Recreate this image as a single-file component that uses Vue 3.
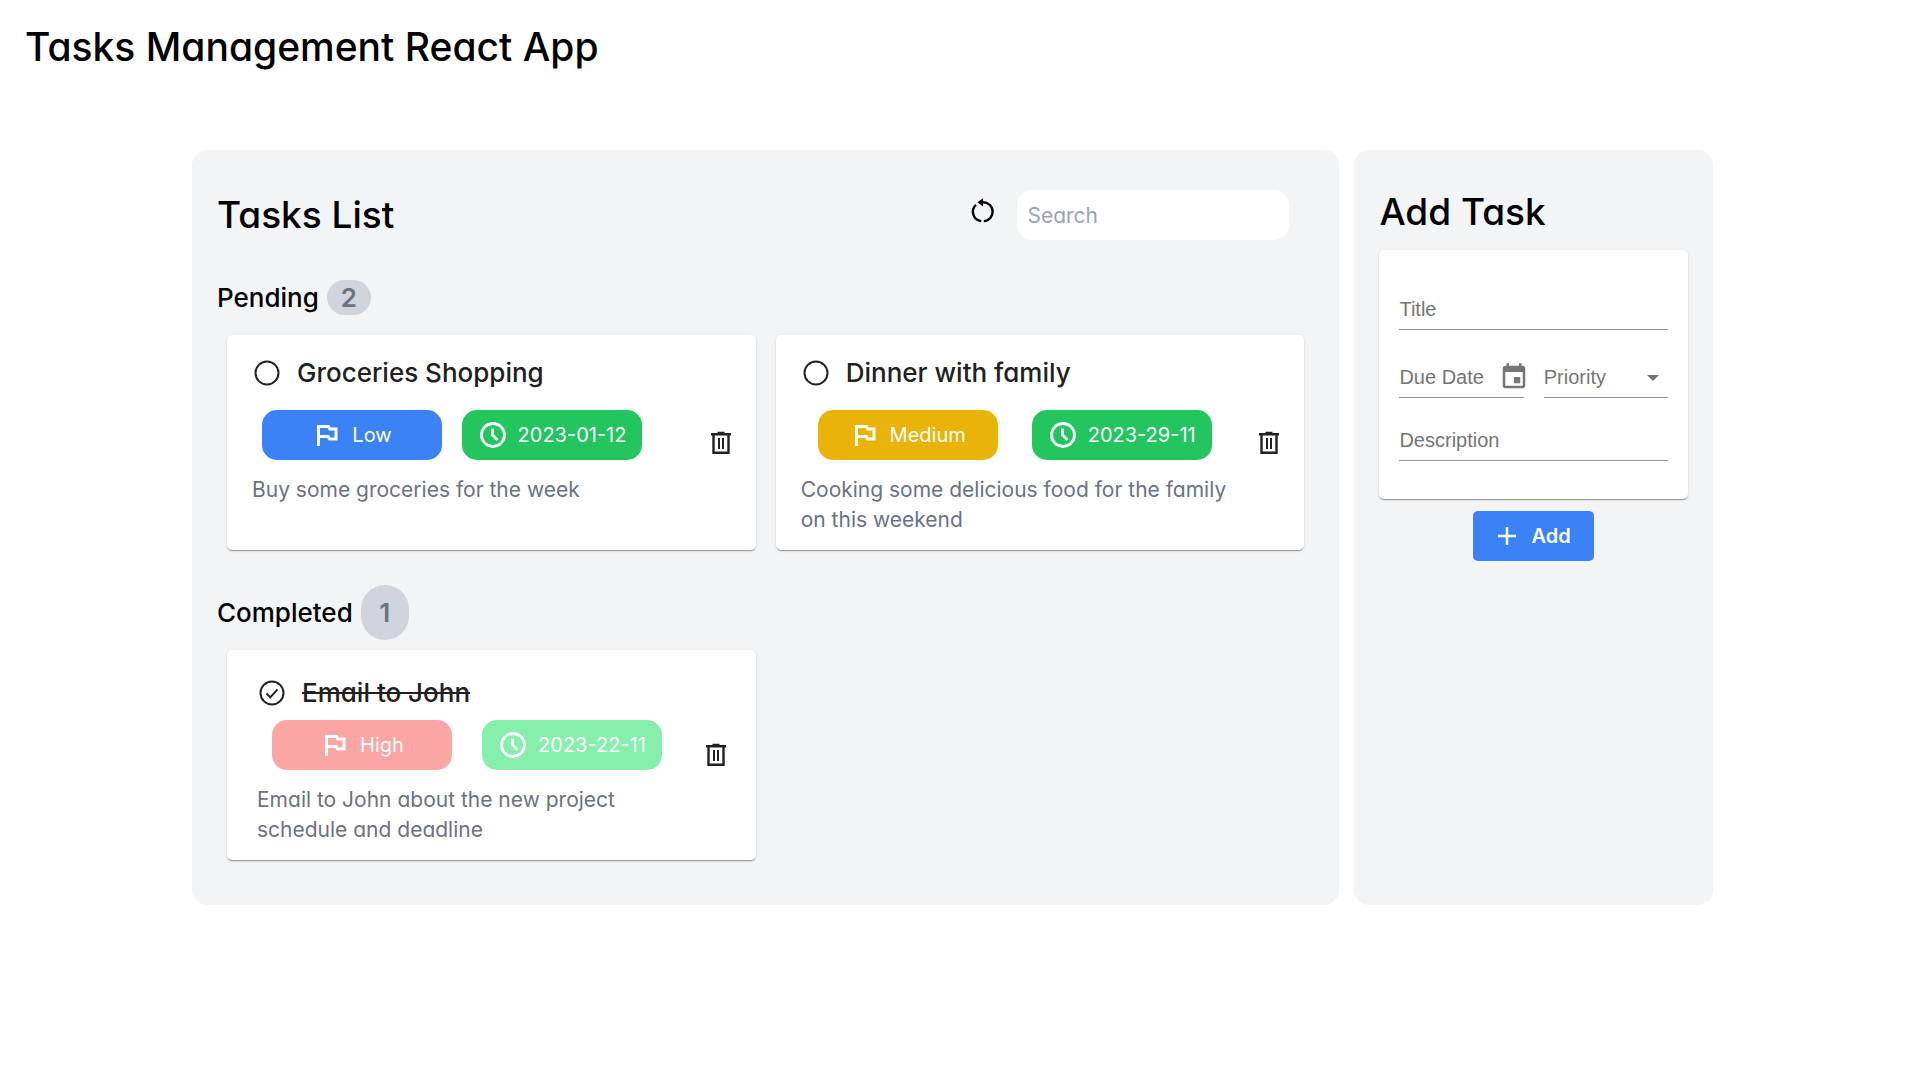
<script setup>
import { reactive, computed, ref } from 'vue'

const search = ref('')
const form = reactive({ title: '', due: '', priority: '', description: '' })

const tasks = reactive([
  { id: 1, title: 'Groceries Shopping', priority: 'Low', due: '2023-01-12', text: 'Buy some groceries for the week', done: false },
  { id: 2, title: 'Dinner with family', priority: 'Medium', due: '2023-29-11', text: 'Cooking some delicious food for the family on this weekend', done: false },
  { id: 3, title: 'Email to John', priority: 'High', due: '2023-22-11', text: 'Email to John about the new project schedule and deadline', done: true }
])

const matching = computed(() => tasks.filter((t) => t.title.toLowerCase().includes(search.value.toLowerCase())))
const groups = computed(() => [
  { name: 'Pending', items: matching.value.filter((t) => !t.done) },
  { name: 'Completed', items: matching.value.filter((t) => t.done) }
])

function remove(id) {
  tasks.splice(tasks.findIndex((t) => t.id === id), 1)
}

function add() {
  if (!form.title) return
  tasks.push({
    id: Date.now(),
    title: form.title,
    priority: form.priority || 'Low',
    due: form.due,
    text: form.description,
    done: false
  })
  Object.assign(form, { title: '', due: '', priority: '', description: '' })
}
</script>

<template>
  <div class="page">
    <header class="top">
      <h1>Tasks Management React App</h1>
    </header>

    <main class="board">
      <section class="panel list">
        <div class="list-head">
          <h2>Tasks List</h2>
          <div class="tools">
            <button type="button" class="icon-btn" aria-label="Reset" @click="search = ''">
              <svg class="reset" viewBox="0 0 24 24" fill="none" stroke="currentColor" stroke-width="2.200">
                <path d="M11.300 21.400A8.700 8.700 0 0 1 6.500 6.300" />
                <path d="M13.700 21.400A8.700 8.700 0 0 0 12.500 4H10" />
                <path d="M13 .2v7.600L7.800 4z" fill="currentColor" stroke="none" />
              </svg>
            </button>
            <input v-model="search" class="search" type="text" placeholder="Search" aria-label="Search" />
          </div>
        </div>

        <section v-for="group in groups" :key="group.name" class="group" :class="group.name.toLowerCase()">
          <h3>{{ group.name }} <span class="count">{{ group.items.length }}</span></h3>
          <div class="cards">
            <article v-for="task in group.items" :key="task.id" class="card" :class="[task.priority.toLowerCase(), { done: task.done }]">
              <div class="body">
                <label class="task-title">
                  <span class="tick">
                    <input v-model="task.done" type="checkbox" />
                    <svg viewBox="0 0 26 26" fill="none" stroke="currentColor" stroke-width="2">
                      <circle cx="13" cy="13" r="11.500" />
                      <path v-if="task.done" d="M7.500 13.500l3.800 3.800 7.200-8" />
                    </svg>
                  </span>
                  <span class="name">{{ task.title }}</span>
                </label>
                <div class="pills">
                  <span class="pill priority">
                    <svg viewBox="0 0 30 30" fill="none" stroke="currentColor" stroke-width="3">
                      <path d="M6.500 26V6.500h10l1.200 2.500h6.300v10h-6.500l-1.300-2.500H6.500" />
                    </svg>
                    {{ task.priority }}
                  </span>
                  <span class="pill date">
                    <svg viewBox="0 0 30 30" fill="none" stroke="currentColor" stroke-width="2.800">
                      <circle cx="15" cy="15" r="11.500" />
                      <path d="M14.500 8.500V15l5 5" />
                    </svg>
                    {{ task.due }}
                  </span>
                </div>
                <p>{{ task.text }}</p>
              </div>
              <button type="button" class="icon-btn" aria-label="Delete" @click="remove(task.id)">
                <svg class="trash" viewBox="0 0 20 24" fill="none" stroke="currentColor" stroke-width="2.400">
                  <path d="M0 3.200h20M6.500 2h7M2.500 3v18.800h15V3" />
                  <path d="M8 7v11M12 7v11" stroke-width="2" />
                </svg>
              </button>
            </article>
          </div>
        </section>
      </section>

      <aside class="panel add">
        <h2>Add Task</h2>
        <form @submit.prevent="add">
          <div class="sheet">
            <div class="field" :class="{ filled: form.title }">
              <input id="title" v-model="form.title" type="text" />
              <label for="title">Title</label>
            </div>
            <div class="pair">
              <div class="field" :class="{ filled: form.due }">
                <input id="due" v-model="form.due" type="text" />
                <label for="due">Due Date</label>
                <button type="button" class="icon-btn calendar" aria-label="Choose date">
                  <svg viewBox="0 0 24 24" fill="currentColor">
                    <path d="M17 12h-5v5h5v-5zM16 1v2H8V1H6v2H5c-1.110 0-1.990.9-1.990 2L3 19c0 1.100.89 2 2 2h14c1.100 0 2-.9 2-2V5c0-1.100-.9-2-2-2h-1V1h-2zm3 18H5V8h14v11z" />
                  </svg>
                </button>
              </div>
              <div class="field" :class="{ filled: form.priority }">
                <select id="priority" v-model="form.priority">
                  <option value=""></option>
                  <option>Low</option>
                  <option>Medium</option>
                  <option>High</option>
                </select>
                <label for="priority">Priority</label>
                <svg class="arrow" viewBox="0 0 12 6" fill="currentColor"><path d="M0 0h12L6 6z" /></svg>
              </div>
            </div>
            <div class="field" :class="{ filled: form.description }">
              <input id="description" v-model="form.description" type="text" />
              <label for="description">Description</label>
            </div>
          </div>
          <button type="submit" class="submit">
            <svg viewBox="0 0 20 20" stroke="currentColor" stroke-width="2.400"><path d="M1 10h18M10 1v18" /></svg>
            Add
          </button>
        </form>
      </aside>
    </main>
  </div>
</template>

<style>
body {
  background: #fff;
}
</style>

<style scoped>
.page,
.page * {
  box-sizing: border-box;
}
.page {
  font-family: Inter, sans-serif;
  font-feature-settings: "cv11";
  color: #000;
}
h1,
h2,
h3,
p {
  margin: 0;
  font-weight: 500;
}
h1 {
  font-size: 39px;
  line-height: 50px;
}
h2 {
  font-size: 37px;
  line-height: 50px;
}
button,
input,
select {
  font: inherit;
  color: inherit;
  border: 0;
  padding: 0;
  margin: 0;
  background: none;
}
svg {
  display: block;
  flex: none;
}
.icon-btn {
  flex: none;
  cursor: pointer;
}
.top {
  padding: 22px 25px;
  height: 150px;
}
.board {
  display: grid;
  grid-template-columns: minmax(0, 16fr) minmax(0, 5fr);
  gap: 15px;
  padding: 0 calc(10% + 15px) 40px 10%;
}
.panel {
  background: #f3f4f6;
  border-radius: 15px;
}
.list {
  padding: 40px 25px 45px;
}
.list-head {
  display: flex;
  align-items: center;
  justify-content: space-between;
  padding-right: 25px;
}
.tools {
  display: flex;
  align-items: center;
  gap: 22px;
}
.reset {
  width: 26px;
  height: 26px;
  margin-bottom: 8px;
}
.search {
  width: 272px;
  height: 50px;
  padding: 0 10px;
  border-radius: 15px;
  background: #fff;
  font-size: 21px;
}
.search::placeholder {
  color: #9ca3af;
  opacity: 1;
}
h3 {
  display: flex;
  align-items: center;
  gap: 8px;
  font-size: 26px;
  line-height: 35px;
}
.pending h3 {
  padding: 40px 0 20px;
}
.completed h3 {
  padding: 35px 0 10px;
}
.count {
  display: grid;
  place-items: center;
  width: 44px;
  height: 35px;
  border-radius: 24px;
  background: #d1d5db;
  color: #6b7280;
  font-weight: 600;
}
.completed .count {
  width: 48px;
  height: 55px;
}
.cards {
  display: grid;
  grid-template-columns: repeat(2, minmax(0, 1fr));
  gap: 20px;
  padding: 0 10px;
}
.card,
.sheet {
  background: #fff;
  border-radius: 5px;
  box-shadow: 0 2px 1px -1px rgba(0, 0, 0, 0.2), 0 1px 1px rgba(0, 0, 0, 0.14), 0 1px 3px rgba(0, 0, 0, 0.12);
}
.card {
  display: flex;
  align-items: center;
  justify-content: space-between;
  padding: 15px 25px 10px;
  min-height: 215px;
  color: #212121;
}
.card.done {
  padding: 20px 30px 10px;
  min-height: 210px;
}
.card .icon-btn {
  margin-bottom: 4px;
}
.card.done .icon-btn {
  margin-bottom: 10px;
}
.body {
  width: 400px;
  align-self: flex-start;
}
.medium .body {
  width: 428px;
}
.done .body {
  width: 420px;
}
.task-title {
  display: flex;
  align-items: center;
  gap: 17px;
  height: 45px;
  padding-left: 2px;
  font-size: 26px;
  font-weight: 500;
}
.done .name {
  text-decoration: line-through;
}
.tick {
  position: relative;
  flex: none;
}
.tick svg {
  width: 26px;
  height: 26px;
}
.tick input {
  position: absolute;
  inset: 0;
  width: 100%;
  height: 100%;
  opacity: 0;
}
.pills {
  display: flex;
  justify-content: space-around;
  padding: 15px 0;
}
.done .pills {
  padding: 5px 0 15px;
}
.pill {
  display: flex;
  align-items: center;
  justify-content: center;
  gap: 10px;
  width: 180px;
  height: 50px;
  border-radius: 15px;
  color: #fff;
  font-size: 20px;
}
.pill svg {
  width: 30px;
  height: 30px;
}
.date {
  background: #22c55e;
}
.low .priority {
  background: #3b82f6;
}
.medium .priority {
  background: #eab308;
}
.high .priority {
  background: #ef4444;
}
.done .date {
  background: #86efac;
}
.done.high .priority {
  background: #fca5a5;
}
p {
  font-size: 21px;
  line-height: 30px;
  font-weight: 400;
  color: #6b7280;
}
.body p {
  margin-right: -8px;
}
.trash {
  width: 20px;
  height: 24px;
}
.add {
  padding: 37px 25px;
}
.sheet {
  margin-top: 13px;
  padding: 35px 20px 38px;
}
.field {
  position: relative;
  flex: 1;
  min-width: 0;
  height: 45px;
  border-bottom: 1px solid #949494;
  font-family: "Liberation Sans", Arial, sans-serif;
  font-size: 20px;
  color: #757575;
}
.field input,
.field select {
  display: block;
  width: 100%;
  height: 44px;
  outline: 0;
  appearance: none;
}
.field label {
  position: absolute;
  left: 0;
  top: 12px;
  line-height: 24px;
  pointer-events: none;
}
.filled label {
  display: none;
}
.pair {
  display: flex;
  gap: 20px;
  padding: 23px 0 18px;
}
.calendar {
  position: absolute;
  right: -5px;
  bottom: 5px;
}
.calendar svg {
  width: 30px;
  height: 30px;
}
.arrow {
  position: absolute;
  right: 9px;
  top: 22px;
  width: 12px;
  height: 6px;
  pointer-events: none;
}
.submit {
  display: flex;
  align-items: center;
  justify-content: center;
  gap: 15px;
  width: 121px;
  height: 50px;
  margin: 12px auto 0;
  border-radius: 5px;
  background: #3b82f6;
  color: #fff;
  font-size: 20px;
  font-weight: 600;
  cursor: pointer;
}
.submit svg {
  width: 20px;
  height: 20px;
}
</style>
